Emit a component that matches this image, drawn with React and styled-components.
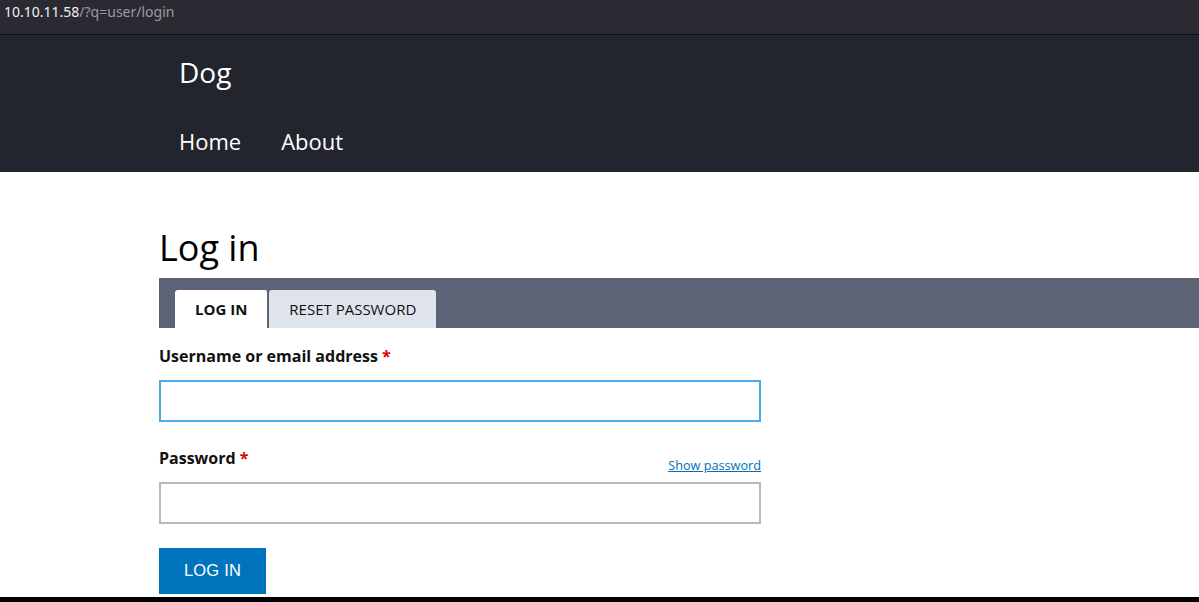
import React from "react";
import styled, { createGlobalStyle } from "styled-components";

const GlobalStyle = createGlobalStyle`
  html, body {
    margin: 0;
    padding: 0;
    background: #ffffff;
    font-family: "Open Sans", "Noto Sans", sans-serif;
    overflow: hidden;
  }
`;

const Page = styled.div`
  width: 1199px;
  height: 602px;
  display: flex;
  flex-direction: column;
  overflow: hidden;
`;

const AddressBar = styled.div`
  height: 35px;
  background: #2b2a33;
  border-bottom: 1px solid #0e0e11;
  display: flex;
  align-items: flex-start;
  padding: 2px 0 0 4px;
  box-sizing: border-box;
  font-family: "Noto Sans", sans-serif;
  font-size: 14px;
  line-height: 20px;
  color: #9a9aa2;
`;

const Host = styled.span`
  color: #f2f2f4;
`;

const Header = styled.header`
  height: 137px;
  background: #22252e;
  padding-left: 179px;
  box-sizing: border-box;
  display: flex;
  flex-direction: column;
`;

const SiteName = styled.div`
  color: #ffffff;
  font-size: 28px;
  line-height: 38px;
  margin-top: 18px;
`;

const Nav = styled.nav`
  display: flex;
  gap: 40px;
  margin-top: 35px;
`;

const NavLink = styled.a`
  color: #ffffff;
  font-size: 22px;
  line-height: 30px;
  text-decoration: none;
`;

const Main = styled.main`
  flex: 1;
  padding-left: 159px;
  display: flex;
  flex-direction: column;
`;

const Title = styled.h1`
  margin: 50px 0 0 0;
  font-size: 36px;
  line-height: 52px;
  font-weight: 400;
  color: #000000;
`;

const TabBar = styled.div`
  margin-top: 4px;
  height: 50px;
  background: #5b6374;
  display: flex;
  align-items: flex-end;
  padding-left: 16px;
`;

const Tab = styled.div`
  height: 38px;
  box-sizing: border-box;
  display: flex;
  align-items: center;
  padding: 0 20px;
  background: ${p => (p.$active ? "#ffffff" : "#dfe3ec")};
  border-radius: 3px 3px 0 0;
  font-size: 15px;
  font-weight: ${p => (p.$active ? 700 : 400)};
  color: #111111;
  border-right: ${p => (p.$active ? "2px solid #5b6374" : "none")};
`;

const Form = styled.form`
  width: 602px;
  display: flex;
  flex-direction: column;
`;

const LabelRow = styled.div`
  display: flex;
  justify-content: space-between;
  align-items: flex-end;
  margin-top: ${p => p.$top}px;
`;

const Label = styled.label`
  font-size: 16px;
  line-height: 24px;
  font-weight: 700;
  color: #111111;
`;

const Star = styled.span`
  color: #e00000;
`;

const ShowLink = styled.a`
  font-size: 12.7px;
  line-height: 16px;
  color: #0071b8;
  text-decoration: underline;
  margin-bottom: -3px;
`;

const Input = styled.div`
  margin-top: 12px;
  height: 42px;
  box-sizing: border-box;
  border: 2px solid ${p => (p.$focus ? "#47ade4" : "#bababa")};
  background: #ffffff;
`;

const Button = styled.button`
  margin-top: 24px;
  align-self: flex-start;
  width: 107px;
  height: 46px;
  border: none;
  background: #0073bd;
  color: #ffffff;
  font-family: "Liberation Sans", Arial, sans-serif;
  font-size: 16.5px;
  letter-spacing: 0.2px;
  padding: 0 0 2px;
`;

const BottomEdge = styled.div`
  height: 5px;
  background: #000000;
  margin-top: auto;
`;

export default function App() {
  return (
    <Page>
      <GlobalStyle />
      <AddressBar>
        <Host>10.10.11.58</Host>/?q=user/login
      </AddressBar>
      <Header>
        <SiteName>Dog</SiteName>
        <Nav>
          <NavLink>Home</NavLink>
          <NavLink>About</NavLink>
        </Nav>
      </Header>
      <Main>
        <Title>Log in</Title>
        <TabBar>
          <Tab $active>LOG IN</Tab>
          <Tab>RESET PASSWORD</Tab>
        </TabBar>
        <Form>
          <LabelRow $top={16}>
            <Label>
              Username or email address <Star>*</Star>
            </Label>
          </LabelRow>
          <Input $focus />
          <LabelRow $top={24}>
            <Label>
              Password <Star>*</Star>
            </Label>
            <ShowLink>Show password</ShowLink>
          </LabelRow>
          <Input />
          <Button type="button">LOG IN</Button>
        </Form>
      </Main>
      <BottomEdge />
    </Page>
  );
}
